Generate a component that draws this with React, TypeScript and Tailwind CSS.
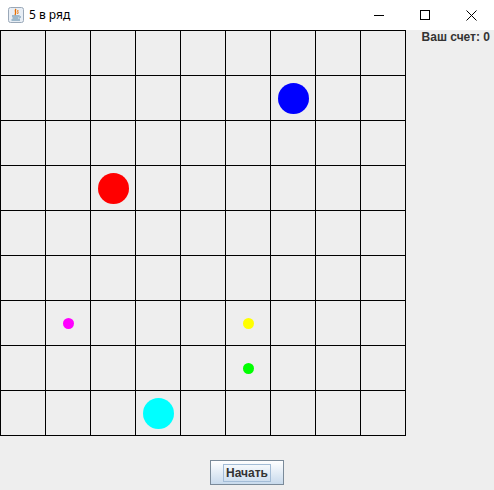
import React from 'react'

// board balls: row, col, colour, diameter
const BALLS = [
  { row: 1, col: 6, color: 'bg-[#0000ff]', size: 'w-[31px] h-[31px]' },
  { row: 3, col: 2, color: 'bg-[#ff0000]', size: 'w-[31px] h-[31px]' },
  { row: 6, col: 1, color: 'bg-[#ff00ff]', size: 'w-[11px] h-[11px]' },
  { row: 6, col: 5, color: 'bg-[#ffff00]', size: 'w-[11px] h-[11px]' },
  { row: 7, col: 5, color: 'bg-[#00ff00]', size: 'w-[11px] h-[11px]' },
  { row: 8, col: 3, color: 'bg-[#00ffff]', size: 'w-[31px] h-[31px]' }
]

function JavaIcon() {
  return (
    <svg width="16" height="16" viewBox="0 0 16 16">
      <rect x="0.5" y="0.5" width="15" height="15" rx="2" fill="#e8eef5" stroke="#9aa8b8" />
      <path d="M8 2 C6 4 9 5 7 8" stroke="#e76f00" strokeWidth="1.4" fill="none" />
      <path d="M10 3 C9 5 11 5 9.5 7" stroke="#e76f00" strokeWidth="1" fill="none" />
      <path d="M4 9 H11 M4.5 11 H10.5 M3.5 13 H12" stroke="#5382a1" strokeWidth="1" />
      <path d="M11 9 C13 9 13 11 11 11" stroke="#5382a1" strokeWidth="0.8" fill="none" />
    </svg>
  )
}

export default function App() {
  const rows = Array.from({ length: 9 }, (_, r) => r)
  const cols = Array.from({ length: 9 }, (_, c) => c)

  return (
    <div className="w-[494px] h-[490px] bg-[#eeeeee] flex flex-col overflow-hidden font-['Liberation_Sans',Arial,sans-serif]">
      {/* TITLE BAR */}
      <div className="h-[30px] bg-white flex items-center shrink-0">
        <div className="pl-[8px] pr-[5px] flex items-center">
          <JavaIcon />
        </div>
        <span className="text-[12px] text-black font-['Noto_Sans',sans-serif]">5 в ряд</span>
        <div className="ml-auto flex h-full">
          <div className="w-[46px] h-full flex items-center justify-center">
            <div className="w-[10px] h-px bg-black" />
          </div>
          <div className="w-[46px] h-full flex items-center justify-center">
            <div className="w-[10px] h-[10px] border border-black" />
          </div>
          <div className="w-[46px] h-full flex items-center justify-center">
            <svg width="11" height="11" viewBox="0 0 11 11">
              <path d="M0.5 0.5 L10.5 10.5 M10.5 0.5 L0.5 10.5" stroke="#000" strokeWidth="1" />
            </svg>
          </div>
        </div>
      </div>

      {/* BOARD + SCORE */}
      <div className="flex">
        <div className="border-l border-t border-black shrink-0">
          {rows.map(r => (
            <div key={r} className="flex">
              {cols.map(c => {
                const ball = BALLS.find(b => b.row === r && b.col === c)
                return (
                  <div
                    key={c}
                    className="w-[45px] h-[45px] border-r border-b border-black flex items-center justify-center"
                  >
                    {ball && <div className={`rounded-full ${ball.color} ${ball.size}`} />}
                  </div>
                )
              })}
            </div>
          ))}
        </div>
        <div className="flex-1 flex justify-end pr-[4px]">
          <span className="text-[12px] leading-[14px] font-bold text-[#333333]">Ваш счет: 0</span>
        </div>
      </div>

      {/* BUTTON */}
      <div className="flex justify-center pt-[24px]">
        <button className="w-[74px] h-[25px] border border-[#7a8a99] bg-gradient-to-b from-white to-[#c8daec] flex items-center justify-center">
          <span className="border border-[#a3bcd6] px-[2px] leading-[16px] text-[12px] font-bold text-[#333333]">
            Начать
          </span>
        </button>
      </div>
    </div>
  )
}
